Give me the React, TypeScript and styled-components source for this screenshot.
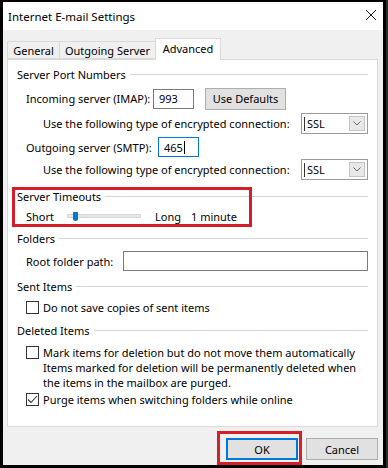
import styled, { createGlobalStyle } from "styled-components";

const GlobalStyle = createGlobalStyle`
  html, body {
    margin: 0;
    padding: 0;
    background: #2b2b2b;
  }
  body {
    font-family: "Noto Sans", "Open Sans", sans-serif;
    font-size: 11px;
    color: #000;
  }
  * {
    box-sizing: border-box;
  }
`;

const Page = styled.div`
  display: flex;
  width: 388px;
  height: 468px;
`;

const Window = styled.div`
  width: 386px;
  height: 468px;
  display: flex;
  flex-direction: column;
  border-top: 2px solid #000;
  border-left: 3px solid #000;
  border-right: 3px solid #000;
  border-bottom: 3px solid #000;
  background: #f0f0f0;
`;

const TitleBar = styled.div`
  height: 28px;
  background: #fff;
  display: flex;
  align-items: center;
  justify-content: space-between;
  padding: 0 6px 0 5px;
  font-size: 11.5px;
`;

const CloseIcon = styled.svg`
  width: 12px;
  height: 12px;
  margin-top: -2px;
`;

const Body = styled.div`
  flex: 1;
  display: flex;
  flex-direction: column;
  padding: 8px 5px 0 4px;
`;

const TabList = styled.div`
  display: flex;
  align-items: flex-end;
  height: 21px;
`;

const Tab = styled.div<{ $active?: boolean; $w: number }>`
  width: ${(p) => p.$w}px;
  height: ${(p) => (p.$active ? 22 : 18)}px;
  margin-bottom: ${(p) => (p.$active ? -1 : 0)}px;
  margin-left: -1px;
  display: flex;
  align-items: center;
  justify-content: center;
  background: ${(p) => (p.$active ? "#fff" : "#f0f0f0")};
  border: 1px solid #d9d9d9;
  border-bottom: ${(p) => (p.$active ? "none" : "1px solid #d9d9d9")};
  padding-bottom: ${(p) => (p.$active ? 2 : 0)}px;
  position: relative;
  z-index: ${(p) => (p.$active ? 1 : 0)};
  &:first-child {
    margin-left: 0;
  }
`;

const Panel = styled.div`
  height: 368px;
  background: #fff;
  border: 1px solid #d9d9d9;
  padding: 6px 9px 0 9px;
  display: flex;
  flex-direction: column;
`;

const GroupHeader = styled.div<{ $mt: number }>`
  display: flex;
  align-items: center;
  height: 16px;
  margin-top: ${(p) => p.$mt}px;
  &::after {
    content: "";
    flex: 1;
    height: 1px;
    margin-left: 4px;
    background: #d4d4d4;
  }
`;

const Row = styled.div<{ $mt: number; $h?: number; $indent?: number }>`
  display: flex;
  align-items: center;
  height: ${(p) => p.$h ?? 16}px;
  margin-top: ${(p) => p.$mt}px;
  padding-left: ${(p) => p.$indent ?? 9}px;
`;

const Label = styled.span<{ $w?: number }>`
  width: ${(p) => (p.$w ? `${p.$w}px` : "auto")};
  flex: ${(p) => (p.$w ? "none" : "1")};
  white-space: nowrap;
`;

const TextBox = styled.div<{ $w?: number; $focus?: boolean }>`
  width: ${(p) => (p.$w ? `${p.$w}px` : "auto")};
  flex: ${(p) => (p.$w ? "none" : "1")};
  height: 20px;
  border: 1px solid ${(p) => (p.$focus ? "#0078d7" : "#7a7a7a")};
  background: #fff;
  display: flex;
  align-items: center;
  padding-left: 5px;
`;

const Caret = styled.span`
  width: 1px;
  height: 13px;
  background: #000;
  margin-left: 1px;
`;

const Button = styled.div<{ $w: number; $default?: boolean }>`
  width: ${(p) => p.$w}px;
  height: 22px;
  display: flex;
  align-items: center;
  justify-content: center;
  background: #e1e1e1;
  border: 1px solid ${(p) => (p.$default ? "#0078d7" : "#adadad")};
  box-shadow: ${(p) => (p.$default ? "inset 0 0 0 1px #0078d7" : "none")};
`;

const Select = styled.div`
  width: 67px;
  height: 21px;
  border: 1px solid #9b9b9b;
  background: #fff;
  display: flex;
  align-items: center;
  padding: 2px;
  &::before {
    content: "";
    width: 1px;
    height: 14px;
    background: #333;
  }
`;

const SelectValue = styled.span`
  flex: 1;
  padding-left: 2px;
`;

const DropButton = styled.div`
  width: 16px;
  height: 15px;
  background: #e8e8e8;
  border: 1px solid #c4c4c4;
  display: flex;
  align-items: center;
  justify-content: center;
`;

const Section = styled.div`
  position: relative;
`;

const Highlight = styled.div`
  position: absolute;
  left: -5px;
  top: 7px;
  width: 240px;
  height: 40px;
  border: 3px solid #d41f2b;
  pointer-events: none;
`;

const Track = styled.div`
  width: 74px;
  height: 4px;
  background: #e7e7e7;
  border: 1px solid #d6d6d6;
  margin-right: 14px;
  display: flex;
  align-items: center;
  padding-left: 5px;
`;

const Thumb = styled.div`
  width: 5px;
  height: 9px;
  background: #0078d7;
  border-radius: 1px 1px 3px 3px;
  flex: none;
`;

const CheckBox = styled.div`
  width: 13px;
  height: 13px;
  border: 1px solid #333;
  background: #fff;
  margin-right: 4px;
  display: flex;
  align-items: center;
  justify-content: center;
  flex: none;
`;

const Note = styled.div`
  padding-left: 26px;
`;

const NoteLine = styled.div`
  height: 15px;
  line-height: 15px;
  white-space: nowrap;
`;

const Footer = styled.div`
  display: flex;
  justify-content: flex-end;
  align-items: flex-end;
  margin-top: 4px;
  gap: 4px;
`;

const OkFrame = styled.div`
  border: 3px solid #d41f2b;
  padding: 4px 1px 2px 6px;
`;

const CancelWrap = styled.div`
  margin-bottom: 5px;
`;

function Chevron() {
  return (
    <svg width="8" height="5" viewBox="0 0 8 5">
      <polyline points="0.5,0.5 4,4 7.5,0.5" fill="none" stroke="#666" strokeWidth="1" />
    </svg>
  );
}

function Check({ checked }: { checked?: boolean }) {
  return (
    <CheckBox>
      {checked && (
        <svg width="11" height="9" viewBox="0 0 11 9">
          <polyline points="1,4.5 4,7.5 10,1" fill="none" stroke="#333" strokeWidth="1.1" />
        </svg>
      )}
    </CheckBox>
  );
}

function EncryptRow({ mt }: { mt: number }) {
  return (
    <Row $mt={mt} $h={21} $indent={26}>
      <Label>Use the following type of encrypted connection:</Label>
      <Select>
        <SelectValue>SSL</SelectValue>
        <DropButton>
          <Chevron />
        </DropButton>
      </Select>
    </Row>
  );
}

export default function App() {
  return (
    <Page>
      <GlobalStyle />
      <Window>
        <TitleBar>
          <span>Internet E-mail Settings</span>
          <CloseIcon viewBox="0 0 12 12">
            <path d="M1 1 L11 11 M11 1 L1 11" stroke="#111" strokeWidth="1" />
          </CloseIcon>
        </TitleBar>
        <Body>
          <TabList>
            <Tab $w={53}>General</Tab>
            <Tab $w={97}>Outgoing Server</Tab>
            <Tab $w={66} $active>
              Advanced
            </Tab>
          </TabList>
          <Panel>
            <GroupHeader $mt={0}>Server Port Numbers</GroupHeader>
            <Row $mt={6} $h={21}>
              <Label $w={127}>Incoming server (IMAP):</Label>
              <TextBox $w={41}>993</TextBox>
              <Button $w={81} style={{ marginLeft: 11 }}>
                Use Defaults
              </Button>
            </Row>
            <EncryptRow mt={4} />
            <Row $mt={3} $h={20}>
              <Label $w={132}>Outgoing server (SMTP):</Label>
              <TextBox $w={41} $focus>
                465
                <Caret />
              </TextBox>
            </Row>
            <EncryptRow mt={2} />

            <Section>
              <GroupHeader $mt={8}>Server Timeouts</GroupHeader>
              <Row $mt={4}>
                <Label $w={41}>Short</Label>
                <Track>
                  <Thumb />
                </Track>
                <Label $w={36}>Long</Label>
                <span>1 minute</span>
              </Row>
              <Highlight />
            </Section>

            <GroupHeader $mt={6}>Folders</GroupHeader>
            <Row $mt={5} $h={20}>
              <Label $w={97}>Root folder path:</Label>
              <TextBox />
            </Row>

            <GroupHeader $mt={7}>Sent Items</GroupHeader>
            <Row $mt={5}>
              <Check />
              <span>Do not save copies of sent items</span>
            </Row>

            <GroupHeader $mt={7}>Deleted Items</GroupHeader>
            <Row $mt={6}>
              <Check />
              <span>Mark items for deletion but do not move them automatically</span>
            </Row>
            <Note>
              <NoteLine>Items marked for deletion will be permanently deleted when</NoteLine>
              <NoteLine>the items in the mailbox are purged.</NoteLine>
            </Note>
            <Row $mt={1}>
              <Check checked />
              <span>Purge items when switching folders while online</span>
            </Row>
          </Panel>
          <Footer>
            <OkFrame>
              <Button $w={72} $default>
                OK
              </Button>
            </OkFrame>
            <CancelWrap>
              <Button $w={72}>Cancel</Button>
            </CancelWrap>
          </Footer>
        </Body>
      </Window>
    </Page>
  );
}
